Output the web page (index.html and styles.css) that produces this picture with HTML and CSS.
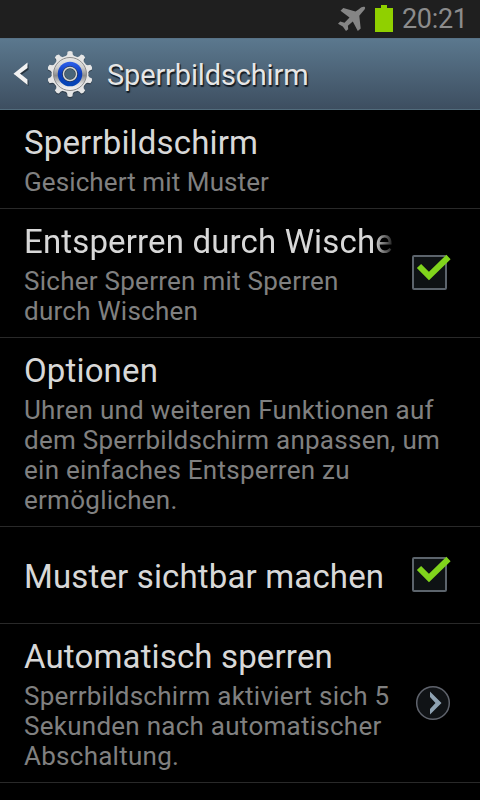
FILE: index.html
```html
<!DOCTYPE html>
<html lang="de">
<head>
<meta charset="utf-8">
<title>Sperrbildschirm</title>
<link rel="stylesheet" href="styles.css">
</head>
<body>
<div class="status">
  <svg class="plane" width="28" height="26" viewBox="0 0 28 26"><path fill="#858585" d="M27 1.200C25.500 .2 23.200 1.200 21.200 3L17.500 5.600L5.300 2L2.500 4.800L11.500 11.500L6.500 16.800L2.200 15.600L0 17.800L4.800 20.500L8 25L10.200 23.200L9.900 19.800L14.800 15.500L19.800 25L22.700 22.500L21.300 9.700L24.200 6.200C26 4.200 27.700 2.300 27 1.200Z"/></svg>
  <svg class="battery" width="18" height="27" viewBox="0 0 18 27"><path fill="#90d000" d="M6 0h6v3h6v24H0V3h6z"/></svg>
  <span class="clock">20:21</span>
</div>
<header class="bar">
  <svg class="back" width="18" height="28" viewBox="0 0 18 28"><path class="back-shadow" d="M16.500 3.200V8.800L9 14L16.500 19.500V25L3 14Z"/><path class="back-line" d="M15.500 1.500V7L8 12.500L15.500 18.500V24L1.500 12.800Z"/></svg>
  <svg class="gear" width="48" height="50" viewBox="-24 -24 48 50">
    <defs>
      <linearGradient id="metal" x1="0" y1="0" x2="0" y2="1"><stop offset="0" stop-color="#e8e8e8"/><stop offset=".3" stop-color="#cecece"/><stop offset=".55" stop-color="#8b8b8b"/><stop offset=".8" stop-color="#dedede"/><stop offset="1" stop-color="#f5f5f5"/></linearGradient>
      <linearGradient id="blue" x1="0" y1="0" x2="0" y2="1"><stop offset="0" stop-color="#2f60ec"/><stop offset=".5" stop-color="#0c3dbb"/><stop offset="1" stop-color="#0547b4"/></linearGradient>
      <g id="teeth"><circle r="18.500"/><path id="t" d="M-4.200-17.500L-2.800-19.500L-2.500-22.300Q0-23.800 2.500-22.300L2.800-19.500L4.200-17.500Z"/><use href="#t" transform="rotate(36)"/><use href="#t" transform="rotate(72)"/><use href="#t" transform="rotate(108)"/><use href="#t" transform="rotate(144)"/><use href="#t" transform="rotate(180)"/><use href="#t" transform="rotate(216)"/><use href="#t" transform="rotate(252)"/><use href="#t" transform="rotate(288)"/><use href="#t" transform="rotate(324)"/></g>
    </defs>
    <use href="#teeth" fill="#26323d" opacity=".7" y="1.200"/>
    <use href="#teeth" fill="#e6e6e6"/>
    <circle r="16.500" fill="url(#metal)" stroke="#8c8c8c" stroke-width="1"/>
    <circle r="12.300" fill="url(#blue)"/>
    <circle r="6.500" fill="#496579" stroke="#283238" stroke-width="2.600"/>
    <circle r="6.500" fill="none" stroke="#d5d8d8" stroke-width="1.500"/>
  </svg>
  <h1>Sperrbildschirm</h1>
</header>
<main>
  <section class="row"><div class="text"><h2>Sperrbildschirm</h2><p class="tight">Gesichert mit Muster</p></div></section>
  <section class="row"><div class="text narrow"><h2 class="fade">Entsperren durch Wische</h2><p>Sicher Sperren mit Sperren<br>durch Wischen</p></div>
    <svg class="check" width="40" height="38" viewBox="0 0 40 38"><rect class="box" x="1" y="3" width="33" height="33" rx="1"/><path class="tick" d="M7 13L17 23L36.500 4"/></svg></section>
  <section class="row"><div class="text"><h2>Optionen</h2><p>Uhren und weiteren Funktionen auf<br>dem Sperrbildschirm anpassen, um<br>ein einfaches Entsperren zu<br>ermöglichen.</p></div></section>
  <section class="row single"><div class="text narrow"><h2>Muster sichtbar machen</h2></div>
    <svg class="check" width="40" height="38" viewBox="0 0 40 38"><rect class="box" x="1" y="3" width="33" height="33" rx="1"/><path class="tick" d="M7 13L17 23L36.500 4"/></svg></section>
  <section class="row"><div class="text narrow"><h2>Automatisch sperren</h2><p>Sperrbildschirm aktiviert sich 5<br>Sekunden nach automatischer<br>Abschaltung.</p></div>
    <svg class="more" width="36" height="36" viewBox="0 0 36 36"><circle cx="18" cy="18" r="16.300" fill="#101316" stroke="#5f636c" stroke-width="1.500"/><path d="M15 6.500L26.500 18L15 29.500V24L20.500 18L15 12Z" fill="#8fa3b3"/></svg></section>
</main>
</body>
</html>
```

FILE: styles.css
```css
* { box-sizing: border-box; }
body { margin: 0; width: 480px; height: 800px; overflow: hidden; background: #000; font-family: Roboto, sans-serif; }
h1, h2, p { margin: 0; font-weight: 400; white-space: nowrap; }
.status { height: 38px; background: #1f1f1f; display: flex; align-items: flex-start; padding: 5px 0 0 338px; }
.plane { margin-top: 1px; }
.battery { margin-left: 9px; }
.clock { margin-left: 9px; font-size: 27px; line-height: 29px; color: #8c8c8c; letter-spacing: -.3px; }
.bar { height: 72px; display: flex; align-items: flex-start; padding-left: 12px; background: linear-gradient(#5b788e, #3d4e60); border-top: 1px solid #587286; border-bottom: 1px solid #526c7c; }
.back { margin-top: 22px; }
.back-line { fill: #f2f2f2; }
.back-shadow { fill: #25323d; }
.gear { margin: 11px 0 0 16px; }
h1 { margin: 18px 0 0 13px; font-size: 29px; line-height: 36px; letter-spacing: -.15px; color: #e6e6e6; text-shadow: 1px 1px 1px #161e26, 1px 2px 1px #161e26; }
.row { display: flex; align-items: center; padding: 13px 0 11px 24px; border-bottom: 1px solid #292929; }
.text { width: 432px; flex: none; }
.narrow { width: 368px; }
h2 { font-size: 33px; line-height: 40px; color: #d8d8d8; letter-spacing: .15px; }
p { margin-top: 4px; font-size: 26px; line-height: 30px; color: #808080; letter-spacing: .26px; }
.tight { letter-spacing: .1px; }
.fade { -webkit-mask-image: linear-gradient(90deg, #000 350px, transparent 372px); mask-image: linear-gradient(90deg, #000 350px, transparent 372px); }
.single { height: 97px; padding-top: 14px; padding-bottom: 10px; }
.check { margin: 0 0 4px 20px; }
.single .check { margin-bottom: 6px; }
.box { fill: #0e1214; stroke: #5c646c; stroke-width: 2; }
.tick { fill: none; stroke: #80d41c; stroke-width: 6; }
.more { margin: 0 0 2px 23px; }
```
